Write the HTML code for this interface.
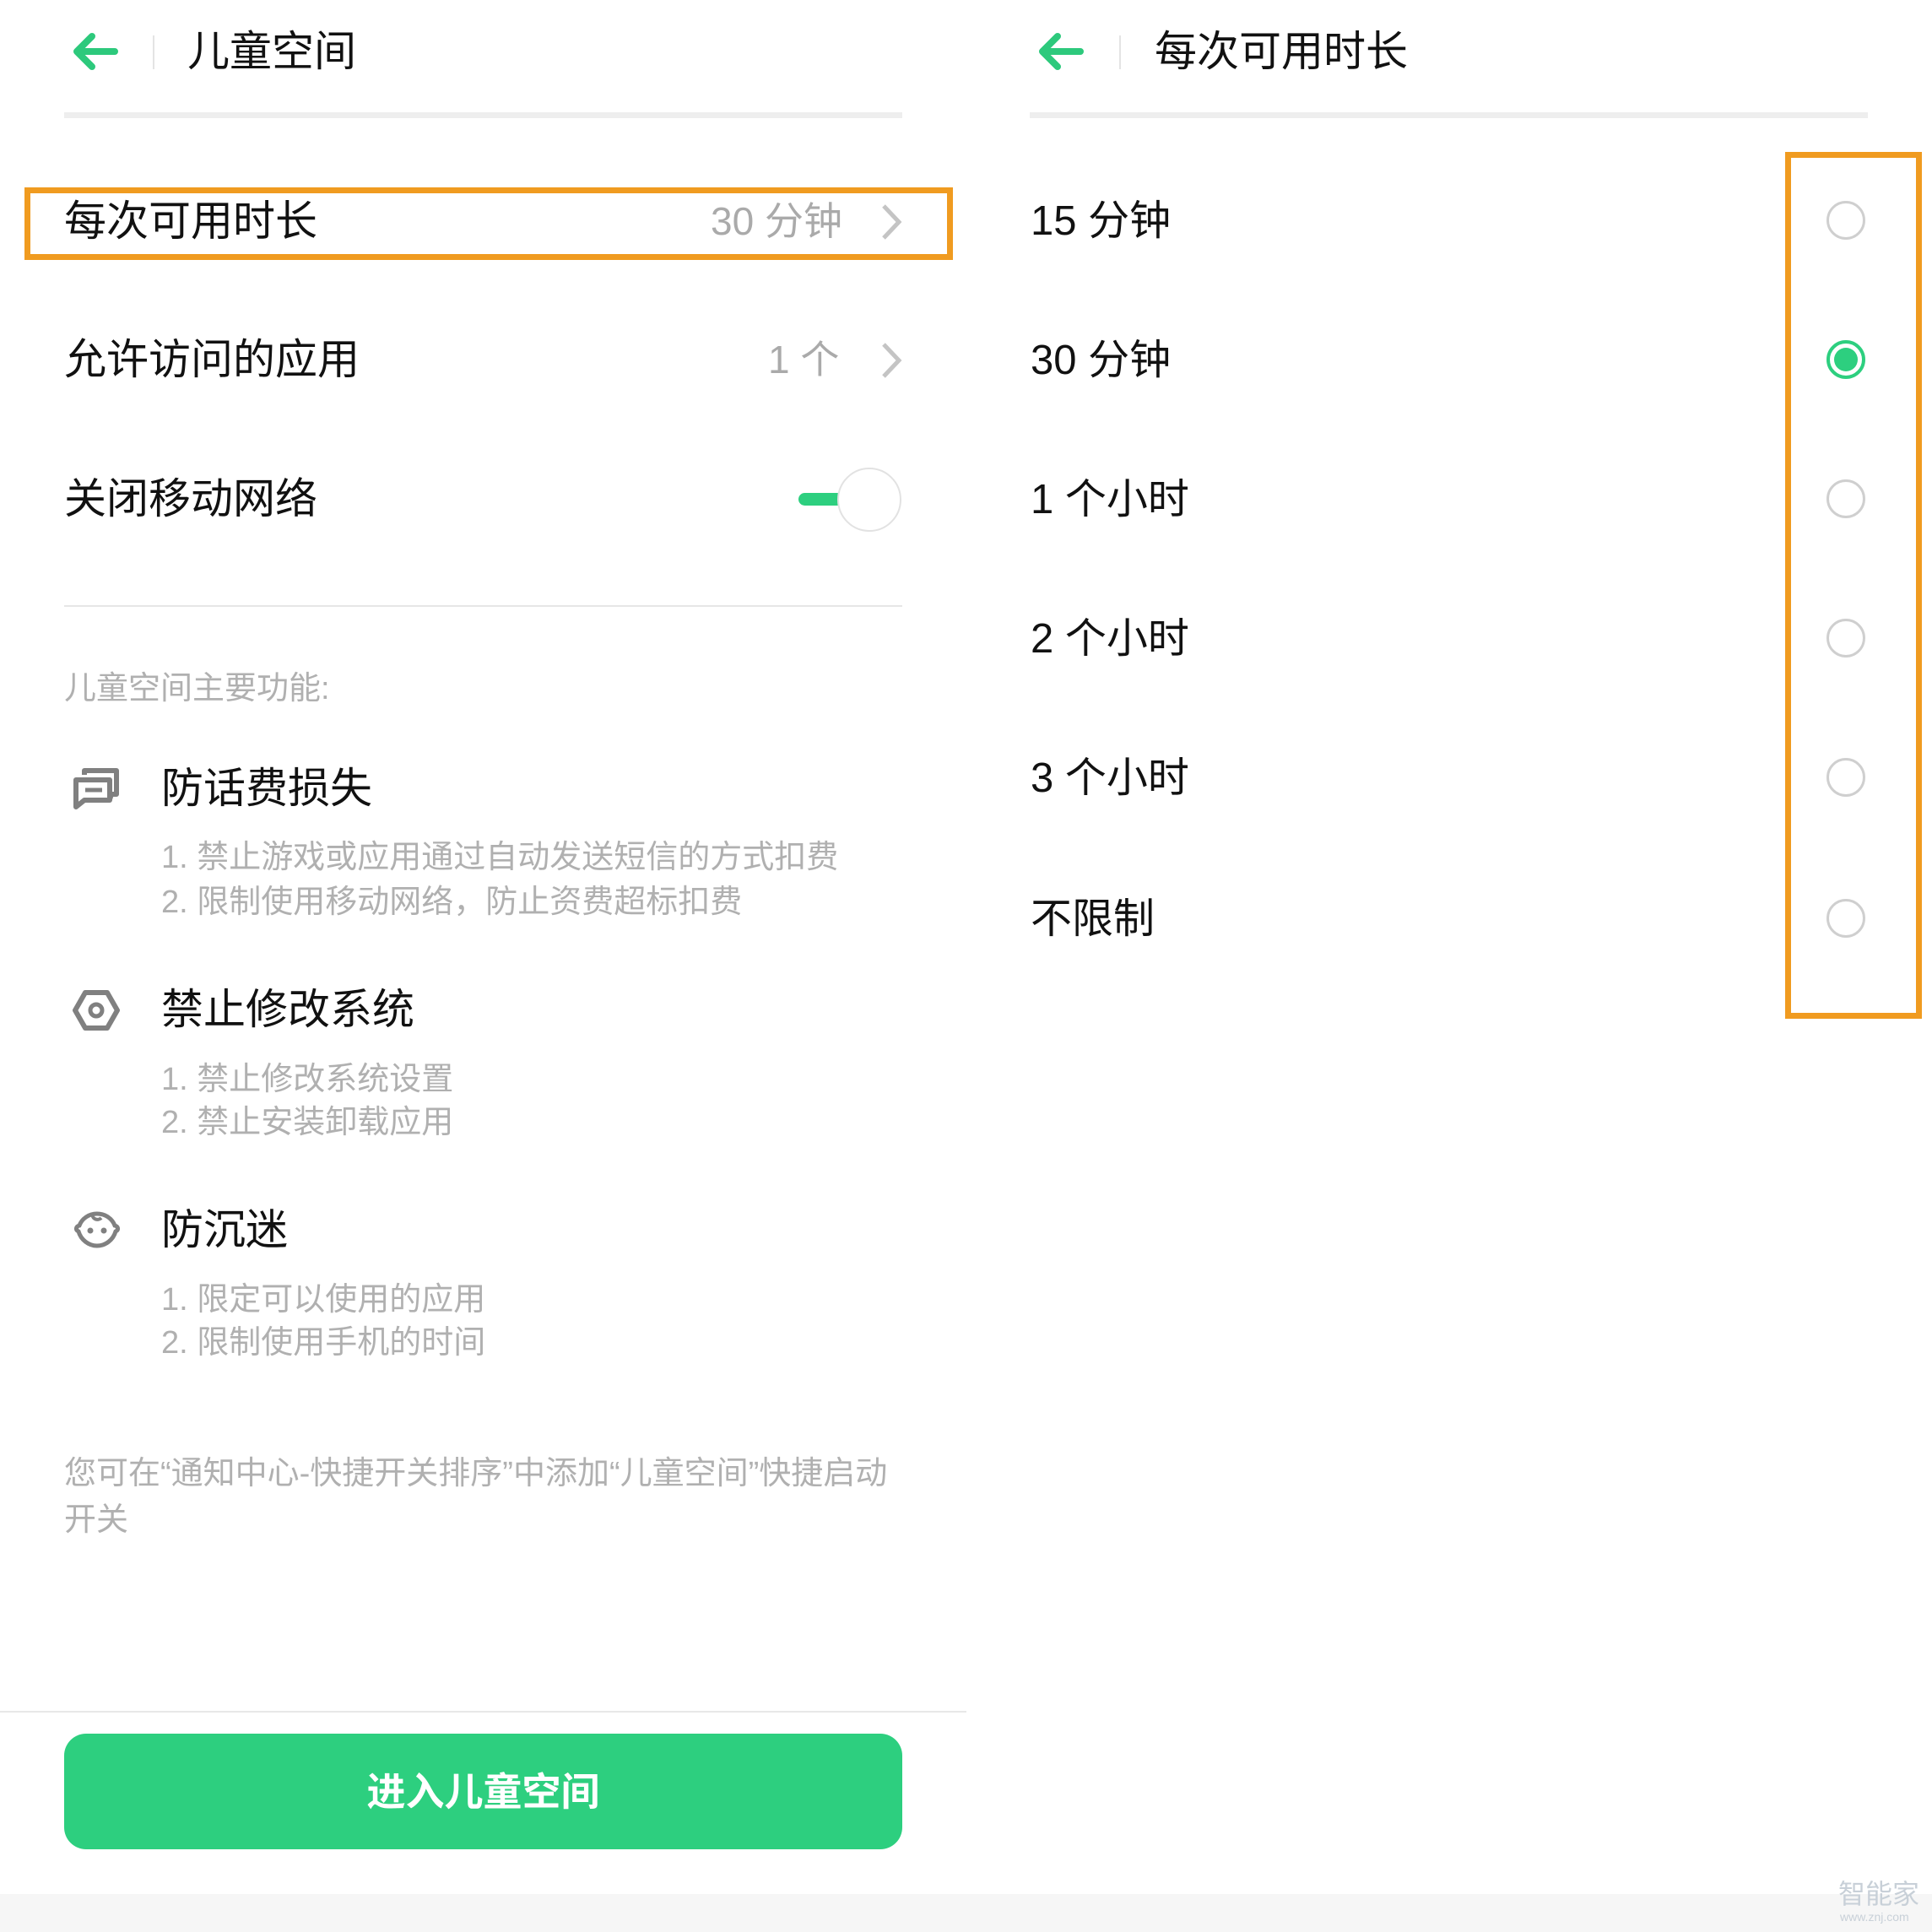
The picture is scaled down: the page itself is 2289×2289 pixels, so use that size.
<!DOCTYPE html>
<html><head><meta charset="utf-8"><style>
*{margin:0;padding:0;box-sizing:border-box}
body{width:2289px;height:2289px;background:#fff;position:relative;overflow:hidden;font-family:"Liberation Sans","Noto Sans CJK SC",sans-serif;color:#111}
.a{position:absolute;white-space:nowrap;line-height:1}
.t{font-size:50px}
.g{color:#aaa}
.s{font-size:38px;color:#b0b0b0}
.bar{position:absolute;height:7px;background:#eeeeee}
.ob{position:absolute;border:7px solid #f09b20}
.rad{position:absolute;width:46px;height:46px;border-radius:50%;border:3.5px solid #cfcfcf;left:2164px}
.r{font-size:49px}
</style></head><body>
<svg class="a" style="left:84px;top:38px" width="56" height="46" viewBox="0 0 56 46"><path d="M52 23H8M25 5L7 23l18 18" fill="none" stroke="#2dc97c" stroke-width="8" stroke-linecap="round" stroke-linejoin="round"/></svg>
<div class="a" style="left:181px;top:42px;width:2px;height:40px;background:#e4e4e4"></div>
<div class="a t" style="left:222px;top:36px">儿童空间</div>
<div class="bar" style="left:76px;top:133px;width:993px"></div>

<div class="ob" style="left:29px;top:222px;width:1100px;height:86px"></div>
<div class="a t" style="left:76px;top:237px">每次可用时长</div>
<div class="a t g" style="left:842px;top:239px;font-size:46px">30 分钟</div>
<svg class="a" style="left:1042px;top:240px" width="28" height="46" viewBox="0 0 28 46"><path d="M5 4l18 19L5 42" fill="none" stroke="#c4c4c4" stroke-width="5"/></svg>

<div class="a t" style="left:76px;top:401px">允许访问的应用</div>
<div class="a t g" style="left:910px;top:403px;font-size:46px">1 个</div>
<svg class="a" style="left:1042px;top:404px" width="28" height="46" viewBox="0 0 28 46"><path d="M5 4l18 19L5 42" fill="none" stroke="#c4c4c4" stroke-width="5"/></svg>

<div class="a t" style="left:76px;top:566px">关闭移动网络</div>
<div class="a" style="left:946px;top:584px;width:60px;height:15px;border-radius:8px;background:#2dcf7f"></div>
<div class="a" style="left:992px;top:554px;width:76px;height:76px;border-radius:50%;background:#fff;border:2px solid #e2e2e2"></div>

<div class="a" style="left:76px;top:717px;width:993px;height:2px;background:#e6e6e6"></div>
<div class="a s" style="left:76px;top:797px">儿童空间主要功能:</div>

<svg class="a" style="left:86px;top:908px" width="56" height="52" viewBox="0 0 56 52"><path d="M14 10V5h38v28h-6l-2 6" fill="none" stroke="#808080" stroke-width="6" stroke-linejoin="round"/><path d="M4 16h40v24H14l-10 8z" fill="none" stroke="#808080" stroke-width="6" stroke-linejoin="round"/><path d="M15 28h20" stroke="#808080" stroke-width="5"/></svg>
<div class="a t" style="left:191px;top:909px">防话费损失</div>
<div class="a s" style="left:191px;top:997px">1. 禁止游戏或应用通过自动发送短信的方式扣费</div>
<div class="a s" style="left:191px;top:1050px">2. 限制使用移动网络，防止资费超标扣费</div>

<svg class="a" style="left:86px;top:1172px" width="56" height="50" viewBox="0 0 56 50"><path d="M15 4h26l12 21-12 21H15L3 25z" fill="none" stroke="#808080" stroke-width="6" stroke-linejoin="round"/><circle cx="28" cy="25" r="7" fill="none" stroke="#808080" stroke-width="5"/></svg>
<div class="a t" style="left:191px;top:1171px">禁止修改系统</div>
<div class="a s" style="left:191px;top:1260px">1. 禁止修改系统设置</div>
<div class="a s" style="left:191px;top:1311px">2. 禁止安装卸载应用</div>

<svg class="a" style="left:86px;top:1432px" width="58" height="52" viewBox="0 0 58 52"><path d="M29 6c10 0 18 6 21 14 4 1 5 5 1 7-3 10-12 17-22 17S10 37 7 27c-4-2-3-6 1-7C11 12 19 6 29 6z" fill="none" stroke="#808080" stroke-width="5"/><path d="M24 6c-2 6 6 9 10 5" fill="none" stroke="#808080" stroke-width="4"/><circle cx="21" cy="26" r="3.5" fill="#808080"/><circle cx="37" cy="26" r="3.5" fill="#808080"/></svg>
<div class="a t" style="left:191px;top:1432px">防沉迷</div>
<div class="a s" style="left:191px;top:1521px">1. 限定可以使用的应用</div>
<div class="a s" style="left:191px;top:1572px">2. 限制使用手机的时间</div>

<div class="a s" style="left:76px;top:1727px">您可在“通知中心-快捷开关排序”中添加“儿童空间”快捷启动</div>
<div class="a s" style="left:76px;top:1782px">开关</div>

<div class="a" style="left:0;top:2027px;width:1145px;height:2px;background:#e8e8e8"></div>
<div class="a" style="left:76px;top:2054px;width:993px;height:137px;border-radius:26px;background:#2dcf7f;color:#fff;font-size:46px;font-weight:bold;display:flex;align-items:center;justify-content:center">进入儿童空间</div>

<svg class="a" style="left:1228px;top:38px" width="56" height="46" viewBox="0 0 56 46"><path d="M52 23H8M25 5L7 23l18 18" fill="none" stroke="#2dc97c" stroke-width="8" stroke-linecap="round" stroke-linejoin="round"/></svg>
<div class="a" style="left:1326px;top:42px;width:2px;height:40px;background:#e4e4e4"></div>
<div class="a t" style="left:1368px;top:36px">每次可用时长</div>
<div class="bar" style="left:1220px;top:133px;width:993px"></div>

<div class="a r" style="left:1221px;top:238px">15 分钟</div>
<div class="a r" style="left:1221px;top:403px">30 分钟</div>
<div class="a r" style="left:1221px;top:568px">1 个小时</div>
<div class="a r" style="left:1221px;top:733px">2 个小时</div>
<div class="a r" style="left:1221px;top:898px">3 个小时</div>
<div class="a r" style="left:1221px;top:1065px">不限制</div>

<div class="rad" style="top:238px"></div>
<div class="rad" style="top:403px;border:4px solid #2dcf7f;padding:5px"><div style="width:100%;height:100%;border-radius:50%;background:#2dcf7f"></div></div>
<div class="rad" style="top:568px"></div>
<div class="rad" style="top:733px"></div>
<div class="rad" style="top:898px"></div>
<div class="rad" style="top:1065px"></div>
<div class="ob" style="left:2115px;top:180px;width:162px;height:1027px"></div>

<div class="a" style="left:0;top:2244px;width:2289px;height:45px;background:#f6f6f6"></div>
<div class="a" style="left:2178px;top:2228px;font-size:32px;color:#c8d0d8">智能家</div>
<div class="a" style="left:2180px;top:2264px;font-size:14px;color:#c8d0d8">www.znj.com</div>
</body></html>
